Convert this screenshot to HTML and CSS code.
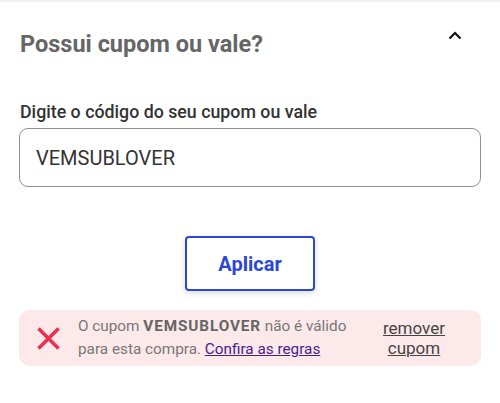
FILE: index.html
```html
<!DOCTYPE html>
<html lang="pt-BR">
<head>
    <meta charset="UTF-8">
    <meta name="viewport" content="width=device-width, initial-scale=1.0">
    <title>Cupom</title>
    <link rel="stylesheet" href="styles.css">
</head>
<body>
    <section class="coupon">
        <div class="coupon-head">
            <h2 class="coupon-title">Possui cupom ou vale?</h2>
            <button class="toggle-button" aria-label="Recolher">
                <svg width="14" height="9" viewBox="0 0 14 9">
                    <path d="M1.5 7.5 L7 2 L12.5 7.5" fill="none" stroke="#111" stroke-width="2.2"/>
                </svg>
            </button>
        </div>

        <label class="field-label" for="coupon-code">Digite o código do seu cupom ou vale</label>
        <input class="coupon-input" id="coupon-code" type="text" value="VEMSUBLOVER">

        <div class="apply-row">
            <button class="apply-button">Aplicar</button>
        </div>

        <div class="alert">
            <svg class="alert-icon" width="25" height="25" viewBox="0 0 25 25">
                <path d="M2.5 2.5 L22.5 22.5 M22.5 2.5 L2.5 22.5" stroke="#e8324f" stroke-width="3.6"/>
            </svg>
            <p class="alert-text">O cupom <strong>VEMSUBLOVER</strong> não é válido para esta compra. <a href="#" class="rules-link">Confira as regras</a></p>
            <a href="#" class="remove-link">remover cupom</a>
        </div>
    </section>
</body>
</html>
```

FILE: styles.css
```css
body {
    margin: 0;
    font-family: Roboto, "Liberation Sans", sans-serif;
    background: #fff;
}

.coupon {
    border-top: 2px solid #efefef;
    padding: 0 19px 0 19px;
}

.coupon-head {
    display: flex;
    justify-content: space-between;
    align-items: flex-start;
    margin-top: 28px;
}
.coupon-title {
    margin: 0;
    font-size: 23.5px;
    line-height: 28px;
    font-weight: 700;
    color: #666;
    padding-left: 1px;
}
.toggle-button {
    border: none;
    background: none;
    padding: 0;
    margin: 1px 19px 0 0;
    width: 14px;
    height: 9px;
    display: flex;
    cursor: pointer;
}

.field-label {
    display: block;
    margin-top: 44px;
    font-size: 17.8px;
    line-height: 20px;
    font-weight: 500;
    color: #333;
    padding-left: 1px;
}
.coupon-input {
    display: block;
    box-sizing: border-box;
    width: 100%;
    height: 59px;
    margin-top: 6px;
    padding: 0 16px;
    border: 1px solid #8f8f8f;
    border-radius: 9px;
    font-family: inherit;
    font-size: 20px;
    color: #333;
    outline: none;
}

.apply-row {
    display: flex;
    justify-content: center;
    margin-top: 49px;
}
.apply-button {
    width: 130px;
    height: 55px;
    border: 2px solid #2b47d6;
    border-radius: 4px;
    background: #fff;
    color: #2b47d6;
    font-family: inherit;
    font-size: 20px;
    font-weight: 700;
    box-shadow: 0 2px 6px rgba(0, 0, 0, 0.15);
    cursor: pointer;
}

.alert {
    display: flex;
    align-items: center;
    margin-top: 19px;
    height: 56px;
    padding: 0 36px 0 17px;
    background: #fde8ea;
    border-radius: 11px;
}
.alert-icon {
    flex: none;
}
.alert-text {
    flex: 1;
    margin: 0 20px 0 17px;
    font-size: 15.3px;
    line-height: 23px;
    color: #777;
}
.alert-text strong {
    color: #666;
    letter-spacing: 0.9px;
}
.rules-link {
    color: #4a1d8c;
}
.remove-link {
    width: min-content;
    text-align: center;
    font-size: 17px;
    line-height: 20px;
    color: #444;
}
```
